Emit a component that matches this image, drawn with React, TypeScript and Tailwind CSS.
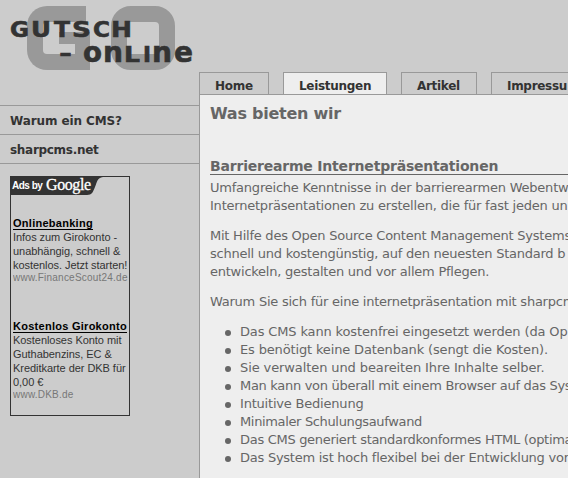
import React from "react";

const wordmark = [
  { c: "G", x: 10, y: 37, w: 19, s: 22 },
  { c: "U", x: 31, y: 37, w: 20, s: 22 },
  { c: "T", x: 54, y: 37, w: 16, s: 22 },
  { c: "S", x: 72, y: 37, w: 19, s: 22 },
  { c: "C", x: 93, y: 37, w: 17, s: 22 },
  { c: "H", x: 111, y: 37, w: 21, s: 22 },
  { c: "-", x: 59, y: 61, w: 13, s: 22 },
  { c: "o", x: 83, y: 62, w: 19, s: 28 },
  { c: "n", x: 103, y: 62, w: 20, s: 28 },
  { c: "L", x: 124, y: 62, w: 16, s: 22 },
  { c: "I", x: 143, y: 62, w: 8, s: 22 },
  { c: "n", x: 152, y: 62, w: 20, s: 28 },
  { c: "e", x: 174, y: 62, w: 19, s: 28 },
];

function Logo() {
  return (
    <div className="relative h-[72px] w-[199px]">
      <div className="absolute left-[27px] top-[6px] h-16 w-[59px] rounded-l-[20px] border-16 border-r-0 border-[#999]" />
      <div className="absolute left-[59px] top-[32px] h-3 w-[31px] bg-[#999]" />
      <div className="absolute left-[75px] top-[32px] h-[38px] w-[15px] bg-[#999]" />
      <div className="absolute left-[111px] top-[6px] h-16 w-16 rounded-[20px] border-16 border-[#999]" />
      <svg className="absolute inset-0" width="199" height="72" fill="#333" stroke="#333" strokeWidth="0.6" fontWeight="bold" fontFamily="'DejaVu Sans', sans-serif">
        {wordmark.map((g) => (
          <text key={g.x} x={g.x} y={g.y} fontSize={g.s} textLength={g.w} lengthAdjust="spacingAndGlyphs">
            {g.c}
          </text>
        ))}
      </svg>
    </div>
  );
}

function Ad({ title, lines, url, className }: { title: string; lines: string[]; url: string; className: string }) {
  return (
    <div className={`overflow-hidden whitespace-nowrap text-[11px] leading-[14px] tracking-[-0.05px] text-[#333] ${className}`}>
      <a className="block w-fit border-b border-black text-[11px] leading-[12px] font-bold tracking-[0.27px] text-black">{title}</a>
      {lines.map((l) => (
        <div key={l}>{l}</div>
      ))}
      <div className="text-[10px] leading-[11px] tracking-[0.22px] text-[#777]">{url}</div>
    </div>
  );
}

function Ads() {
  return (
    <div className="mt-3 ml-[10px] h-[240px] w-[120px] border border-[#333] font-['Liberation_Sans',sans-serif]">
      <div className="relative h-[18px] text-white">
        <svg className="absolute inset-0" width="118" height="18">
          <path d="M0 0H92C86 1 86 5 84 10C82 15 81 18 76 18H0Z" fill="#333" />
        </svg>
        <span className="absolute left-[1px] top-[2px] text-[10px] leading-[13px] font-bold tracking-[-0.5px] whitespace-nowrap">Ads by</span>
        <span className="absolute left-[35px] top-[-2px] font-['Liberation_Serif',serif] text-[16px] leading-[19px] tracking-[-0.4px] [-webkit-text-stroke:0.3px_white]">Google</span>
      </div>
      <Ad className="mt-[22px] ml-[2px]" title="Onlinebanking" lines={["Infos zum Girokonto -", "unabhängig, schnell &", "kostenlos. Jetzt starten!"]} url="www.FinanceScout24.de" />
      <Ad className="mt-[37px] ml-[2px]" title="Kostenlos Girokonto" lines={["Kostenloses Konto mit", "Guthabenzins, EC &", "Kreditkarte der DKB für", "0,00 €"]} url="www.DKB.de" />
    </div>
  );
}

const tabs = [
  { label: "Home", style: "w-[70px]" },
  { label: "Leistungen", style: "w-[104px] bg-[#eee]" },
  { label: "Artikel", style: "w-[76px]" },
  { label: "Impressu", style: "w-[112px]" },
];

const points = [
  { text: "Das CMS kann kostenfrei eingesetzt werden (da Op", style: "tracking-[-0.14px]" },
  { text: "Es benötigt keine Datenbank (sengt die Kosten).", style: "tracking-[-0.15px]" },
  { text: "Sie verwalten und beareiten Ihre Inhalte selber.", style: "tracking-[-0.1px]" },
  { text: "Man kann von überall mit einem Browser auf das Sys", style: "tracking-[-0.3px]" },
  { text: "Intuitive Bedienung", style: "tracking-[-0.2px]" },
  { text: "Minimaler Schulungsaufwand", style: "tracking-[-0.35px]" },
  { text: "Das CMS generiert standardkonformes HTML (optima", style: "tracking-[-0.3px]" },
  { text: "Das System ist hoch flexibel bei der Entwicklung von", style: "tracking-[-0.25px]" },
];

export default function App() {
  return (
    <div className="flex h-[478px] w-[568px] overflow-hidden bg-[#ccc] font-['DejaVu_Sans',sans-serif] text-[13px] leading-[18px] text-[#666]">
      <aside className="w-[199px] shrink-0">
        <Logo />
        <nav className="mt-[33px] border-t border-[#999] text-xs leading-[18px] font-bold text-[#333]">
          <a className="block h-[29px] border-b border-[#999] pt-[6px] pl-[10px] tracking-[-0.1px]">Warum ein CMS?</a>
          <a className="block h-[29px] border-b border-[#999] pt-[6px] pl-[10px] tracking-[-0.3px]">sharpcms.net</a>
        </nav>
        <Ads />
      </aside>
      <div className="flex w-[369px] flex-col overflow-hidden pt-[72px]">
        <div className="flex h-[22px] gap-[14px]">
          {tabs.map((t) => (
            <a key={t.label} className={`h-full shrink-0 border border-b-0 border-[#999] pt-[4px] pl-[15px] text-xs leading-[18px] font-bold tracking-[-0.3px] text-[#333] ${t.style}`}>
              {t.label}
            </a>
          ))}
        </div>
        <main className="flex-1 border-t border-l border-[#999] bg-[#eee] pl-[10px] whitespace-nowrap">
          <h1 className="mt-[7px] text-base leading-[24px] font-bold tracking-[-0.25px]">Was bieten wir</h1>
          <h2 className="mt-[31px] h-[18px] border-b border-[#666] text-sm leading-[18px] font-bold tracking-[-0.2px]">Barrierearme Internetpräsentationen</h2>
          <p className="mt-[4px] tracking-[-0.22px]">Umfangreiche Kenntnisse in der barrierearmen Webentw<br />Internetpräsentationen zu erstellen, die für fast jeden un</p>
          <p className="mt-3 tracking-[-0.24px]">Mit Hilfe des Open Source Content Management Systems<br />schnell und kostengünstig, auf den neuesten Standard b<br />entwickeln, gestalten und vor allem Pflegen.</p>
          <p className="mt-3 tracking-[-0.24px]">Warum Sie sich für eine internetpräsentation mit sharpcm</p>
          <ul className="mt-3">
            {points.map((p) => (
              <li key={p.text} className={`flex items-center ${p.style}`}>
                <i className="mt-px mr-[9px] ml-[15px] size-[6px] shrink-0 rounded-full bg-[#666]" />
                {p.text}
              </li>
            ))}
          </ul>
        </main>
      </div>
    </div>
  );
}
